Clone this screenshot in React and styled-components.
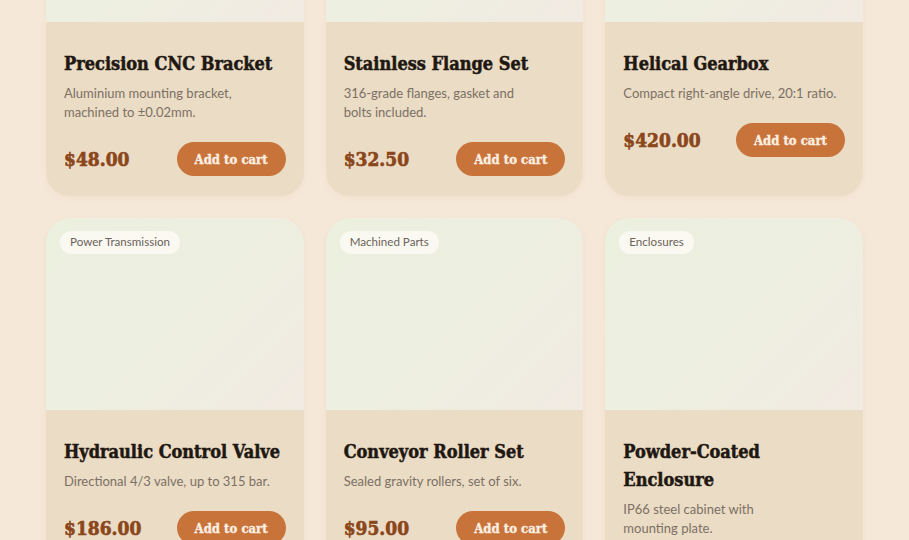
import React from "react";
import styled, { createGlobalStyle } from "styled-components";

const Global = createGlobalStyle`
  html, body { margin: 0; padding: 0; background: #f6e8d8; }
  body { font-family: "Lato", "Noto Sans", sans-serif; overflow: hidden; }
`;

const serif = `"DejaVu Serif Condensed", "DejaVu Serif", serif`;

const Grid = styled.div`
  display: grid;
  grid-template-columns: repeat(3, 1fr);
  column-gap: 22px;
  row-gap: 22px;
  padding: 0 46px;
  margin-top: -170px;
`;

const Card = styled.article`
  display: flex;
  flex-direction: column;
  background: #eadcc5;
  border-radius: 24px;
  overflow: hidden;
  box-shadow: 0 2px 6px rgba(120, 80, 40, 0.05);
`;

const Media = styled.div`
  position: relative;
  height: 192px;
  background: linear-gradient(135deg, #ecf0df 0%, #edefe0 50%, #f1eae2 100%);
`;

const Tag = styled.span`
  position: absolute;
  top: 13px;
  left: 14px;
  padding: 4px 10px 5px;
  border-radius: 999px;
  background: rgba(253, 250, 244, 0.85);
  color: #6b625a;
  font-size: 11.6px;
  line-height: 14px;
`;

const Body = styled.div`
  display: flex;
  flex-direction: column;
  flex: 1;
  padding: 28px 18px 20px;
`;

const Title = styled.h3`
  margin: 0;
  font-family: ${serif};
  font-stretch: condensed;
  font-weight: 700;
  font-size: 18px;
  line-height: 28px;
  color: #1f1812;
  -webkit-text-stroke: 0.5px currentColor;
`;

const Desc = styled.p`
  margin: 6px 0 0;
  font-size: 13px;
  line-height: 19px;
  color: #7d7064;
  max-width: ${(p) => (p.$narrow ? "185px" : "none")};
`;

const Footer = styled.div`
  display: flex;
  align-items: center;
  justify-content: space-between;
  margin-top: 20px;
`;

const Price = styled.span`
  font-family: ${serif};
  font-stretch: condensed;
  font-weight: 700;
  font-size: 19px;
  color: #8b461b;
  -webkit-text-stroke: 0.6px currentColor;
`;

const Button = styled.button`
  height: 34px;
  padding: 0 18px;
  border: none;
  border-radius: 999px;
  background: #c8733a;
  color: #fcefe2;
  font-family: ${serif};
  font-stretch: condensed;
  font-weight: 700;
  font-size: 13px;
  -webkit-text-stroke: 0.35px currentColor;
  cursor: pointer;
`;

const items = [
  { title: "Precision CNC Bracket", desc: "Aluminium mounting bracket, machined to ±0.02mm.", price: "$48.00", narrow: true },
  { title: "Stainless Flange Set", desc: "316-grade flanges, gasket and bolts included.", price: "$32.50", narrow: true },
  { title: "Helical Gearbox", desc: "Compact right-angle drive, 20:1 ratio.", price: "$420.00" },
  { tag: "Power Transmission", title: "Hydraulic Control Valve", desc: "Directional 4/3 valve, up to 315 bar.", price: "$186.00" },
  { tag: "Machined Parts", title: "Conveyor Roller Set", desc: "Sealed gravity rollers, set of six.", price: "$95.00" },
  { tag: "Enclosures", title: "Powder-Coated Enclosure", desc: "IP66 steel cabinet with mounting plate.", price: "$310.00", narrow: true },
];

export default function App() {
  return (
    <>
      <Global />
      <Grid>
        {items.map((it) => (
          <Card key={it.title}>
            <Media>{it.tag && <Tag>{it.tag}</Tag>}</Media>
            <Body>
              <Title>{it.title}</Title>
              <Desc $narrow={it.narrow}>{it.desc}</Desc>
              <Footer>
                <Price>{it.price}</Price>
                <Button>Add to cart</Button>
              </Footer>
            </Body>
          </Card>
        ))}
      </Grid>
    </>
  );
}
